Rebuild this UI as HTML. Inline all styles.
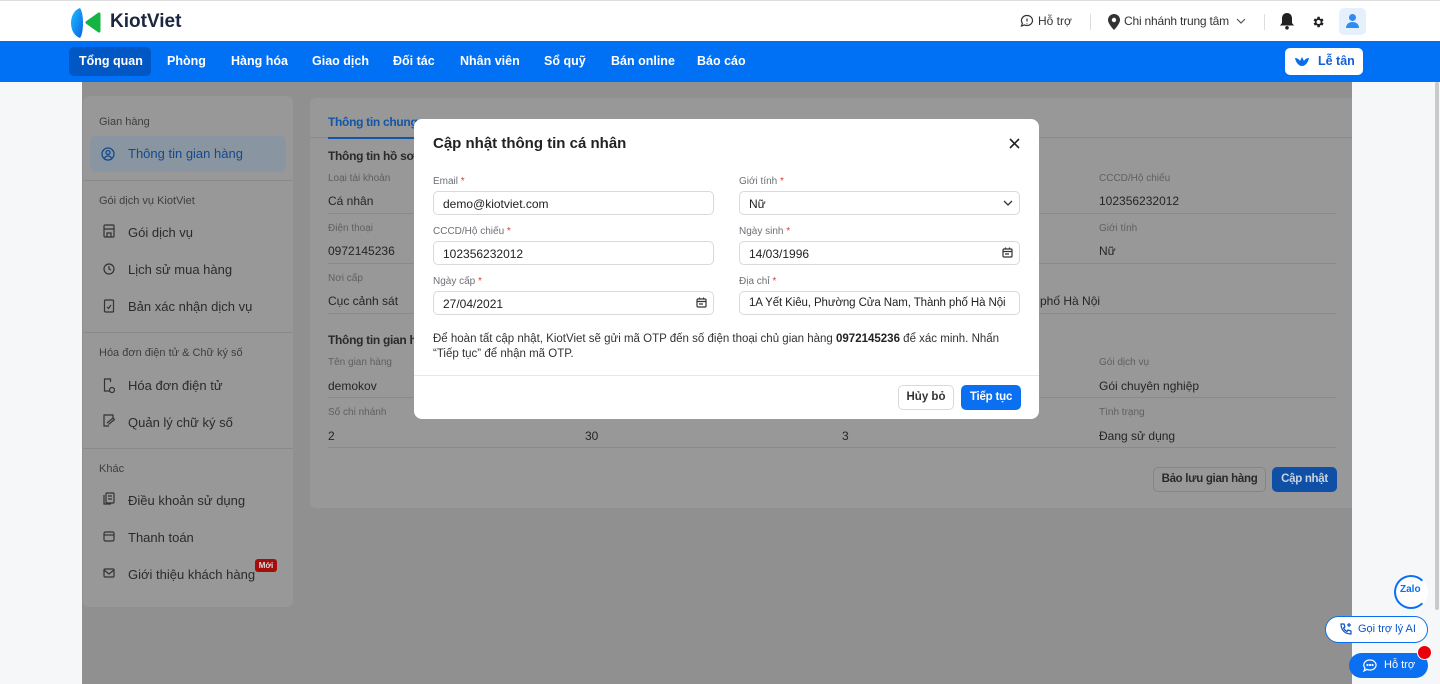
<!DOCTYPE html>
<html><head><meta charset="utf-8"><style>
*{box-sizing:border-box;margin:0;padding:0}
body{width:1440px;height:684px;overflow:hidden;position:relative;font-family:"Liberation Sans",Arial,sans-serif;background:#f6f7f9;color:#222}
.a{position:absolute;white-space:nowrap}
.hdr{left:0;top:0;width:1440px;height:41px;background:#fff;border-top:1px solid #ddd}
.nav{left:0;top:41px;width:1440px;height:41px;background:#0070f4}
.nav span{position:absolute;top:13px;color:#fff;font-weight:bold;font-size:12.5px}
.ov{left:82px;top:82px;width:1270px;height:602px;background:#8f908f}
.pn{background:#989898;border-radius:6px}
.sb{font-size:13px;color:#2b2b2b}
.sh{font-size:11px;color:#3d3e40}
.lbl{font-size:10px;color:#5e6061}
.val{font-size:12px;color:#252525}
.ln{height:1px;background:#8a8a8a}
.modal{left:414px;top:119px;width:625px;height:300px;background:#fff;border-radius:8px}
.ml{font-size:10px;color:#6b6f75}
.ml b{color:#e53935;font-weight:normal}
.in{position:absolute;height:24px;border:1px solid #d6d9de;border-radius:5px;font-size:12px;color:#222;padding:5px 9px;overflow:hidden}
</style></head><body>
<div class="a hdr">
  <svg class="a" style="left:69px;top:6px" width="32" height="32" viewBox="0 0 32 32"><defs><linearGradient id="g1" x1="0" y1="0" x2="1" y2="1"><stop offset="0" stop-color="#1ec0ff"/><stop offset="1" stop-color="#0a62e6"/></linearGradient></defs><path d="M11 1 C-1 5 -1 27 11 31 C15 26 15 6 11 1Z" fill="url(#g1)"/><path d="M30 7 L18 15.5 L30 24Z" fill="#14b443" stroke="#14b443" stroke-width="3" stroke-linejoin="round"/></svg>
  <div class="a" style="left:110px;top:10px;font-size:19px;font-weight:bold;color:#1b2640">KiotViet</div>
  <svg class="a" style="left:1020px;top:13px" width="14" height="14" viewBox="0 0 14 14"><path d="M7 1.5a5.5 5 0 1 1-2.6 9.4L1.5 12l.9-2.7A5.5 5 0 0 1 7 1.5Z" fill="none" stroke="#333" stroke-width="1.2"/><path d="M7 4.5v3M7 9v.6" stroke="#333" stroke-width="1.2"/></svg>
  <div class="a" style="left:1038px;top:13px;font-size:12px;color:#333">Hỗ trợ</div>
  <div class="a" style="left:1090px;top:13px;width:1px;height:16px;background:#ddd"></div>
  <svg class="a" style="left:1108px;top:13px" width="12" height="16" viewBox="0 0 12 16"><path d="M6 0a6 6 0 0 1 6 6c0 4-6 10-6 10S0 10 0 6a6 6 0 0 1 6-6Z" fill="#333"/><circle cx="6" cy="6" r="2.2" fill="#fff"/></svg>
  <div class="a" style="left:1124px;top:13px;font-size:12px;color:#333;letter-spacing:-0.2px">Chi nhánh trung tâm</div>
  <svg class="a" style="left:1236px;top:17px" width="10" height="6"><path d="M1 1l4 4 4-4" fill="none" stroke="#555" stroke-width="1.2"/></svg>
  <div class="a" style="left:1264px;top:13px;width:1px;height:16px;background:#ddd"></div>
  <svg class="a" style="left:1279px;top:11px" width="16" height="18" viewBox="0 0 16 18"><path d="M8 1c3 0 5 2.3 5 5.3V11l2 2.5H1L3 11V6.3C3 3.3 5 1 8 1Z" fill="#222"/><circle cx="8" cy="15.8" r="1.8" fill="#222"/></svg>
  <svg class="a" style="left:1311px;top:14px" width="14" height="14" viewBox="0 0 24 24"><path fill="#222" d="M19.4 13a7.5 7.5 0 0 0 0-2l2.1-1.6-2-3.5-2.5 1a7.6 7.6 0 0 0-1.7-1L15 3h-4l-.4 2.9a7.6 7.6 0 0 0-1.7 1l-2.5-1-2 3.5L6.6 11a7.5 7.5 0 0 0 0 2l-2.1 1.6 2 3.5 2.5-1a7.6 7.6 0 0 0 1.7 1L11 21h4l.4-2.9a7.6 7.6 0 0 0 1.7-1l2.5 1 2-3.5ZM13 15.5a3.5 3.5 0 1 1 0-7 3.5 3.5 0 0 1 0 7Z"/></svg>
  <div class="a" style="left:1339px;top:7px;width:27px;height:27px;border-radius:5px;background:#e6f0fd"></div>
  <svg class="a" style="left:1345px;top:12px" width="15" height="16" viewBox="0 0 15 16"><circle cx="7.5" cy="4.5" r="3.5" fill="#2f8cf0"/><path d="M1 15c0-4 3-6 6.5-6s6.5 2 6.5 6Z" fill="#2f8cf0"/></svg>
</div>
<div class="a nav">
  <div class="a" style="left:69px;top:6px;width:82px;height:29px;background:#0158c4;border-radius:5px"></div>
  <span style="left:79px">Tổng quan</span><span style="left:167px">Phòng</span><span style="left:231px">Hàng hóa</span><span style="left:312px">Giao dịch</span><span style="left:393px">Đối tác</span><span style="left:460px">Nhân viên</span><span style="left:544px">Sổ quỹ</span><span style="left:611px">Bán online</span><span style="left:697px">Báo cáo</span>
  <div class="a" style="left:1285px;top:7px;width:78px;height:27px;background:#fff;border-radius:5px"></div>
  <svg class="a" style="left:1294px;top:13px" width="16" height="13" viewBox="0 0 16 13"><path d="M1 4c2 0 4 1 5 3L8 3l2 4c1-2 3-3 5-3-1 5-4 8-7 8S2 9 1 4Z" fill="#0a6ee8"/></svg>
  <span style="left:1318px;top:13px;color:#1160d6">Lễ tân</span>
</div>
<div class="a ov"></div>
<div class="a pn" style="left:83px;top:96px;width:210px;height:511px"></div>
<div class="a sh" style="left:99px;top:116px">Gian hàng</div>
<div class="a" style="left:90px;top:136px;width:196px;height:36px;background:#8a95a2;border-radius:5px"></div>
<svg class="a" style="left:101px;top:147px" width="14" height="14" viewBox="0 0 14 14"><circle cx="7" cy="7" r="6" fill="none" stroke="#13498d" stroke-width="1.3"/><circle cx="7" cy="5.5" r="2" fill="none" stroke="#13498d" stroke-width="1.3"/><path d="M3.5 11c1-1.5 2-2 3.5-2s2.5.5 3.5 2" fill="none" stroke="#13498d" stroke-width="1.3"/></svg>
<div class="a" style="left:128px;top:146px;font-size:13px;color:#13498d">Thông tin gian hàng</div>
<div class="a ln" style="left:83px;top:180px;width:210px"></div>
<div class="a sh" style="left:99px;top:195px">Gói dịch vụ KiotViet</div>
<div class="a sb" style="left:128px;top:225px">Gói dịch vụ</div>
<div class="a sb" style="left:128px;top:262px">Lịch sử mua hàng</div>
<div class="a sb" style="left:128px;top:299px">Bản xác nhận dịch vụ</div>
<div class="a ln" style="left:83px;top:332px;width:210px"></div>
<div class="a sh" style="left:99px;top:347px">Hóa đơn điện tử &amp; Chữ ký số</div>
<div class="a sb" style="left:128px;top:378px">Hóa đơn điện tử</div>
<div class="a sb" style="left:128px;top:415px">Quản lý chữ ký số</div>
<div class="a ln" style="left:83px;top:448px;width:210px"></div>
<div class="a sh" style="left:99px;top:463px">Khác</div>
<div class="a sb" style="left:128px;top:493px">Điều khoản sử dụng</div>
<div class="a sb" style="left:128px;top:530px">Thanh toán</div>
<div class="a sb" style="left:128px;top:567px">Giới thiệu khách hàng</div>
<div class="a" style="left:255px;top:559px;width:22px;height:13px;background:#a50d0d;border-radius:3px;color:#ddd;font-size:8px;font-weight:bold;text-align:center;line-height:13px">Mới</div>
<svg class="a" style="left:103px;top:224px" width="12" height="175" viewBox="0 0 12 175" fill="none" stroke="#333" stroke-width="1.2"><rect x="1" y="1" width="10" height="12" rx="1"/><path d="M1 5h10M4 13V9h4v4"/><circle cx="6" cy="45" r="5"/><path d="M6 42v3l2 1"/><rect x="1.5" y="76" width="9" height="12" rx="1"/><path d="M4 83l1.5 1.5L8 81"/><path d="M7 167H1.5v-12h6v3"/><circle cx="9" cy="166" r="2.5"/></svg>
<svg class="a" style="left:103px;top:414px" width="12" height="166" viewBox="0 0 12 166" fill="none" stroke="#333" stroke-width="1.2"><path d="M10 5V1H1v11h5"/><path d="M4 9l6-5 1.5 1.5-6 5"/><rect x="3" y="79" width="8" height="10" rx="1"/><path d="M1 81v9h7M5 82h4M5 85h4"/><rect x="1" y="118" width="10" height="9" rx="1.5"/><path d="M1 121h10"/><rect x="1" y="155" width="10" height="8" rx="1"/><path d="M1 156l5 4 5-4"/></svg>

<div class="a pn" style="left:310px;top:98px;width:1042px;height:410px;border-radius:6px 0 0 6px"></div>
<div class="a ln" style="left:310px;top:137px;width:1042px"></div>
<div class="a" style="left:328px;top:115px;font-size:12px;font-weight:bold;color:#1456a6;letter-spacing:-0.3px">Thông tin chung</div>
<div class="a" style="left:328px;top:137px;width:90px;height:2px;background:#1456a6"></div>
<div class="a val" style="left:328px;top:149px;font-weight:bold;color:#2a2a2a;letter-spacing:-0.3px">Thông tin hồ sơ</div>
<div class="a val" style="left:328px;top:333px;font-weight:bold;color:#2a2a2a;letter-spacing:-0.3px">Thông tin gian hàng</div>
<div class="a lbl" style="left:328px;top:173px">Loại tài khoản</div><div class="a val" style="left:328px;top:194px">Cá nhân</div>
<div class="a lbl" style="left:328px;top:223px">Điện thoại</div><div class="a val" style="left:328px;top:244px">0972145236</div>
<div class="a lbl" style="left:328px;top:273px">Nơi cấp</div><div class="a val" style="left:328px;top:294px">Cục cảnh sát</div>
<div class="a lbl" style="left:1099px;top:173px">CCCD/Hộ chiếu</div><div class="a val" style="left:1099px;top:194px">102356232012</div>
<div class="a lbl" style="left:1099px;top:223px">Giới tính</div><div class="a val" style="left:1099px;top:244px">Nữ</div>
<div class="a val" style="left:1040px;top:294px">phố Hà Nội</div>
<div class="a lbl" style="left:328px;top:357px">Tên gian hàng</div><div class="a val" style="left:328px;top:379px">demokov</div>
<div class="a lbl" style="left:328px;top:407px">Số chi nhánh</div><div class="a val" style="left:328px;top:429px">2</div>
<div class="a val" style="left:585px;top:429px">30</div><div class="a val" style="left:842px;top:429px">3</div>
<div class="a lbl" style="left:1099px;top:357px">Gói dịch vụ</div><div class="a val" style="left:1099px;top:379px">Gói chuyên nghiệp</div>
<div class="a lbl" style="left:1099px;top:407px">Tình trạng</div><div class="a val" style="left:1099px;top:429px">Đang sử dụng</div>
<div class="a ln" style="left:328px;top:213px;width:1008px"></div>
<div class="a ln" style="left:328px;top:263px;width:1008px"></div>
<div class="a ln" style="left:328px;top:313px;width:1008px"></div>
<div class="a ln" style="left:328px;top:397px;width:1008px"></div>
<div class="a ln" style="left:328px;top:447px;width:1008px"></div>
<div class="a" style="left:1153px;top:467px;width:113px;height:25px;border:1px solid #858585;border-radius:5px;font-size:11.5px;font-weight:bold;color:#2a2a2a;text-align:center;line-height:23px;letter-spacing:-0.3px">Bảo lưu gian hàng</div>
<div class="a" style="left:1272px;top:467px;width:65px;height:25px;background:#0f4fa6;border-radius:5px;font-size:11.5px;font-weight:bold;color:#c8d3e3;text-align:center;line-height:25px;letter-spacing:-0.3px">Cập nhật</div>

<div class="a modal">
  <div class="a" style="left:19px;top:16px;font-size:15px;font-weight:bold;color:#222">Cập nhật thông tin cá nhân</div>
  <svg class="a" style="left:595px;top:19px" width="11" height="11"><path d="M1 1l9 9M10 1l-9 9" stroke="#222" stroke-width="1.6"/></svg>
  <div class="a ml" style="left:19px;top:57px">Email <b>*</b></div>
  <div class="in" style="left:19px;top:72px;width:281px">demo@kiotviet.com</div>
  <div class="a ml" style="left:19px;top:107px">CCCD/Hộ chiếu <b>*</b></div>
  <div class="in" style="left:19px;top:122px;width:281px">102356232012</div>
  <div class="a ml" style="left:19px;top:157px">Ngày cấp <b>*</b></div>
  <div class="in" style="left:19px;top:172px;width:281px">27/04/2021</div>
  <div class="a ml" style="left:325px;top:57px">Giới tính <b>*</b></div>
  <div class="in" style="left:325px;top:72px;width:281px">Nữ</div>
  <svg class="a" style="left:589px;top:81px" width="10" height="6"><path d="M1 1l4 4 4-4" fill="none" stroke="#333" stroke-width="1.3"/></svg>
  <div class="a ml" style="left:325px;top:107px">Ngày sinh <b>*</b></div>
  <div class="in" style="left:325px;top:122px;width:281px">14/03/1996</div>
  <div class="a ml" style="left:325px;top:157px">Địa chỉ <b>*</b></div>
  <div class="in" style="left:325px;top:172px;width:281px;font-size:11.5px;letter-spacing:-0.1px">1A Yết Kiêu, Phường Cửa Nam, Thành phố Hà Nội</div>
  <svg class="a" style="left:588px;top:128px" width="11" height="11" viewBox="0 0 11 11" fill="none" stroke="#333" stroke-width="1.2"><rect x="1" y="2" width="9" height="8" rx="1"/><path d="M1 4.5h9M3.5 0.5v2M7.5 0.5v2M3 7h4"/></svg>
  <svg class="a" style="left:282px;top:178px" width="11" height="11" viewBox="0 0 11 11" fill="none" stroke="#333" stroke-width="1.2"><rect x="1" y="2" width="9" height="8" rx="1"/><path d="M1 4.5h9M3.5 0.5v2M7.5 0.5v2M3 7h4"/></svg>
  <div class="a" style="left:19px;top:213px;font-size:11.5px;color:#333;line-height:15px">Để hoàn tất cập nhật, KiotViet sẽ gửi mã OTP đến số điện thoại chủ gian hàng <b style="color:#222">0972145236</b> để xác minh. Nhấn<br>“Tiếp tục” để nhận mã OTP.</div>
  <div class="a" style="left:0;top:256px;width:625px;height:1px;background:#e6e8eb"></div>
  <div class="a" style="left:484px;top:266px;width:56px;height:25px;border:1px solid #d6d9de;border-radius:5px;font-size:11.5px;font-weight:bold;color:#333;text-align:center;line-height:23px">Hủy bỏ</div>
  <div class="a" style="left:547px;top:266px;width:60px;height:25px;background:#0a6ff0;border-radius:5px;font-size:11.5px;font-weight:bold;color:#fff;text-align:center;line-height:25px;letter-spacing:-0.2px">Tiếp tục</div>
</div>

<div class="a" style="left:1435px;top:82px;width:4px;height:528px;background:#c9cacc;border-radius:2px"></div>
<div class="a" style="left:1394px;top:575px;width:34px;height:34px;border-radius:50%;background:#fff;border:2px solid #0a6ff0;border-color:#0a6ff0 transparent #0a6ff0 #0a6ff0"></div>
<div class="a" style="left:1400px;top:584px;font-size:10px;font-weight:bold;color:#0a6ff0">Zalo</div>
<div class="a" style="left:1325px;top:616px;width:103px;height:27px;border:1px solid #0a6ff0;border-radius:14px;background:#fff"></div>
<svg class="a" style="left:1339px;top:622px" width="14" height="14" viewBox="0 0 14 14" fill="none" stroke="#0a55c8" stroke-width="1.2"><path d="M2 2l3 0 1 3-1.5 1a7 7 0 0 0 3.5 3.5L9 8l3 1v3c-6 0-10-4-10-10Z"/><path d="M10 1v4M8 3h4"/></svg>
<div class="a" style="left:1358px;top:623px;font-size:11px;color:#0a55c8">Gọi trợ lý AI</div>
<div class="a" style="left:1349px;top:653px;width:79px;height:25px;border-radius:13px;background:#0a6ff0"></div>
<svg class="a" style="left:1363px;top:659px" width="14" height="13" viewBox="0 0 14 13" fill="none" stroke="#fff" stroke-width="1.2"><path d="M7 1a6 5 0 1 1-3 9.3L1 12l1-3A6 5 0 0 1 7 1Z"/><circle cx="4.5" cy="6" r=".5"/><circle cx="7" cy="6" r=".5"/><circle cx="9.5" cy="6" r=".5"/></svg>
<div class="a" style="left:1384px;top:659px;font-size:11px;color:#fff">Hỗ trợ</div>
<div class="a" style="left:1417px;top:645px;width:15px;height:15px;border-radius:50%;background:#e8000b;border:1px solid #fff"></div>
</body></html>
